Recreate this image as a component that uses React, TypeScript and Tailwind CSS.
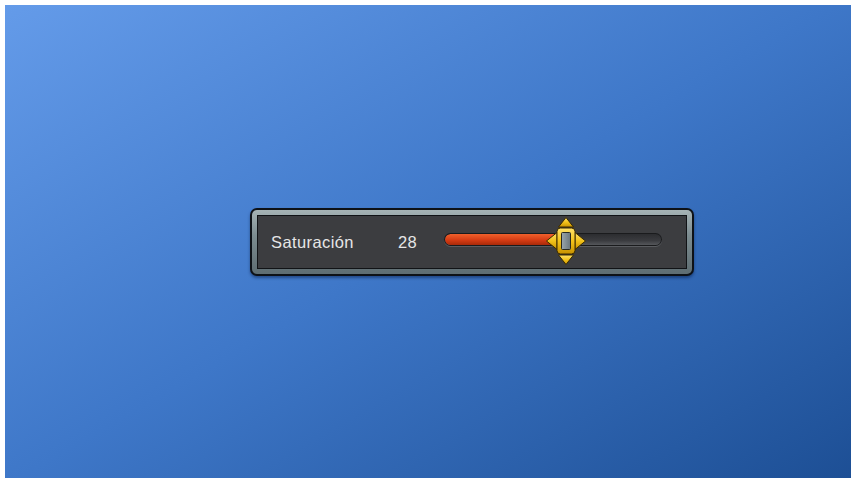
import React from "react";

// Flecha + pulgar amarillo del slider, dibujado como icono.
const Thumb = () => (
  <svg width="40" height="50" viewBox="0 0 40 50" className="absolute left-[102px] top-[-17px]">
    <defs>
      <linearGradient id="yel" x1="0" y1="0" x2="0" y2="1">
        <stop offset="0" stopColor="#ffe36a" />
        <stop offset="0.5" stopColor="#f2c21a" />
        <stop offset="1" stopColor="#c89200" />
      </linearGradient>
      <linearGradient id="gry" x1="0" y1="0" x2="1" y2="0">
        <stop offset="0" stopColor="#9aa6ad" />
        <stop offset="1" stopColor="#6a767d" />
      </linearGradient>
    </defs>
    <g stroke="#3a2a00" strokeWidth="1" strokeLinejoin="round" fill="url(#yel)">
      <path d="M20 1.5 L27.5 11 L12.5 11 Z" />
      <path d="M20 48.5 L27.5 39 L12.5 39 Z" />
      <path d="M0.5 25 L11 16.5 L11 33.5 Z" />
      <path d="M39.5 25 L29 16.5 L29 33.5 Z" />
      <rect x="11" y="12" width="18" height="26" rx="3.5" />
    </g>
    <rect x="15.5" y="16.5" width="9" height="17" rx="1" fill="url(#gry)" stroke="#2a2a20" strokeWidth="1" />
  </svg>
);

const SliderTrack = ({ fill }: { fill: number }) => (
  <div className="relative mb-[5px] w-[218px] h-[13px] rounded-full bg-[#1a1b1d] p-[1px] shadow-[0_1px_0_#5a5c60]">
    <div className="w-full h-full rounded-full bg-[linear-gradient(#2c2d30,#3a3b3f_60%,#55575b)] overflow-hidden">
      <div
        className="h-full rounded-full bg-[linear-gradient(#f0602c,#d63c14_55%,#a82a0a)]"
        style={{ width: `${fill}px` }}
      />
    </div>
    <Thumb />
  </div>
);

export default function App() {
  return (
    <div className="w-full h-[478px] bg-white pt-[5px] pl-[5px] pr-[2px] flex">
      <div className="flex-1 flex items-center pl-[245px] pt-[1px] bg-[linear-gradient(150deg,#649be9,#3e77c8_50%,#1d4f95)]">
        <div className="w-[444px] h-[68px] rounded-[7px] bg-[#0e1217] p-[2px] shadow-[0_2px_3px_rgba(0,20,60,0.45)]">
          <div className="w-full h-full rounded-[5px] bg-[linear-gradient(#a6b3b5,#7c8c90_40%,#5e6d72)] p-[5px]">
            <div className="w-full h-full bg-[#111316] p-[1px]">
              <div
                className="w-full h-full bg-[#3c3d40] flex items-center pl-[13px] text-[#e6e6e6] text-[16.5px] tracking-[0.4px]"
                style={{ fontFamily: '"Liberation Sans", Arial, sans-serif' }}
              >
                <span className="w-[127px]">Saturación</span>
                <span className="w-[46px]">28</span>
                <SliderTrack fill={114} />
              </div>
            </div>
          </div>
        </div>
      </div>
    </div>
  );
}
